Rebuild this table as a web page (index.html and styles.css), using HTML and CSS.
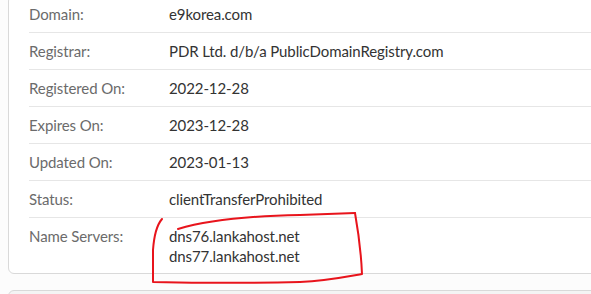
FILE: index.html
```html
<!DOCTYPE html>
<html lang="en">

<head>
    <meta charset="UTF-8">
    <meta name="viewport" content="width=device-width, initial-scale=1.0">
    <title>Whois - e9korea.com</title>
    <link rel="stylesheet" href="styles.css">
</head>

<body>
    <div class="page">
        <div class="card whois">
            <div class="row">
                <div class="label">Domain:</div>
                <div class="value">e9korea.com</div>
            </div>
            <div class="row">
                <div class="label">Registrar:</div>
                <div class="value">PDR Ltd. d/b/a PublicDomainRegistry.com</div>
            </div>
            <div class="row">
                <div class="label">Registered On:</div>
                <div class="value">2022-12-28</div>
            </div>
            <div class="row">
                <div class="label">Expires On:</div>
                <div class="value">2023-12-28</div>
            </div>
            <div class="row">
                <div class="label">Updated On:</div>
                <div class="value">2023-01-13</div>
            </div>
            <div class="row">
                <div class="label">Status:</div>
                <div class="value">clientTransferProhibited</div>
            </div>
            <div class="row last">
                <div class="label">Name Servers:</div>
                <div class="value">
                    dns76.lankahost.net<br>
                    dns77.lankahost.net
                </div>
            </div>

            <!-- hand drawn marker around the name servers -->
            <svg class="scribble" width="240" height="90" viewBox="140 205 240 90">
                <path d="M162 219 C156 226 154 236 153 250 L153 282 C200 283 260 283 300 282 C325 281 345 277 362 274 C361 250 358 230 355 213"
                    fill="none" stroke="#e8141c" stroke-width="2" stroke-linecap="round" stroke-linejoin="round" />
                <path d="M178 229 C205 221 245 216 300 215 L355 213"
                    fill="none" stroke="#e8141c" stroke-width="2" stroke-linecap="round" />
            </svg>
        </div>

        <div class="card next"></div>
    </div>
</body>

</html>
```

FILE: styles.css
```css
:root {
    --label-color: #6b6b6b;
    --text-color: #333333;
    --line-color: #e6e6e6;
    --border-color: #d9d9d9;
    --background-color: #fcfcfc;
}

html,
body {
    margin: 0;
    overflow: hidden;
}

body {
    font-family: Lato, "Open Sans", Arial, sans-serif;
    font-size: 15px;
    letter-spacing: -0.1px;
    background-color: var(--background-color);
    color: var(--text-color);
}

.page {
    width: 700px;
    padding-left: 8px;
}

.card {
    background-color: #ffffff;
    border: 1px solid var(--border-color);
    border-radius: 6px;
}

.whois {
    position: relative;
    margin-top: -5px;
    padding: 0 20px;
}

.row {
    display: flex;
    padding: 8px 0;
    line-height: 20px;
    border-bottom: 1px solid var(--line-color);
}

.row.last {
    padding-bottom: 7px;
    border-bottom: none;
}

.label {
    width: 140px;
    flex-shrink: 0;
    color: var(--label-color);
}

.value {
    color: var(--text-color);
}

.scribble {
    position: absolute;
    left: 131px;
    top: 209px;
    pointer-events: none;
}

.next {
    margin-top: 16px;
    height: 40px;
    background-color: #f4f4f4;
}
```
